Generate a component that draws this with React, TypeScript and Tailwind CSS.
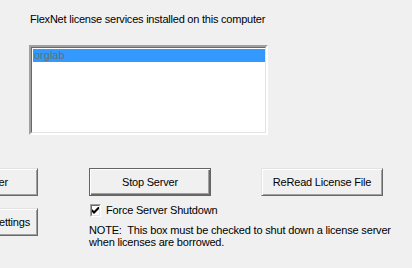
import React from 'react';

const font = { fontFamily: '"Liberation Sans", Arial, sans-serif' };

// Classic raised Windows button
const Btn = ({ children, isDefault = false, className = '' }: { children: React.ReactNode; isDefault?: boolean; className?: string }) => (
    <div
        className={`h-[28px] flex items-center text-[11px] tracking-[-0.2px] text-black bg-[#f0f0f0] ${
            isDefault
                ? 'border border-[#646464] shadow-[inset_1px_1px_0_#ffffff,inset_-1px_-1px_0_#696969,inset_-2px_-2px_0_#a0a0a0]'
                : 'border border-t-[#e3e3e3] border-l-[#e3e3e3] border-r-[#696969] border-b-[#696969] shadow-[inset_1px_1px_0_#ffffff,inset_-1px_-1px_0_#a0a0a0]'
        } ${className}`}
    >
        {children}
    </div>
);

const App = () => {
    return (
        <div className="w-[412px] h-[268px] bg-[#f0f0f0] overflow-hidden" style={font}>
            <p className="pt-[13px] pl-[30px] text-[11px] leading-[13px] tracking-[-0.22px] text-black">
                FlexNet license services installed on this computer
            </p>

            {/* Listbox */}
            <div className="mt-[19px] ml-[29px] w-[239px] h-[90px] bg-white border-2 border-t-[#a0a0a0] border-l-[#a0a0a0] border-r-white border-b-white">
                <div className="h-full border border-t-[#696969] border-l-[#696969] border-r-[#e3e3e3] border-b-[#e3e3e3] pt-[1px] pl-[1px]">
                    <div className="h-[13px] bg-[#3399ff] text-[11px] leading-[13px] text-[#6d6d6d] pl-[1px]">orglab</div>
                </div>
            </div>

            {/* Buttons */}
            <div className="mt-[33px] flex items-start">
                <div className="-ml-[84px] w-[122px] flex flex-col gap-[12px]">
                    <Btn className="justify-end pr-[29px]">Start Server</Btn>
                    <Btn className="justify-end pr-[7px]">Edit Advanced settings</Btn>
                </div>

                <div className="ml-[51px] w-[122px]">
                    <Btn isDefault className="justify-center">Stop Server</Btn>
                    <div className="mt-[8px] flex items-center gap-[5px] ml-[1px]">
                        <div className="w-[13px] h-[13px] bg-white border border-t-[#a0a0a0] border-l-[#a0a0a0] border-r-white border-b-white">
                            <div className="w-full h-full border border-t-[#696969] border-l-[#696969] border-r-[#e3e3e3] border-b-[#e3e3e3] flex items-center justify-center">
                                <svg width="7" height="7" viewBox="0 0 7 7">
                                    <path d="M0 2 L0 5 L2 7 L7 2 L7 -1 L2 4 Z" fill="#000" />
                                </svg>
                            </div>
                        </div>
                        <span className="text-[11px] leading-[13px] tracking-[-0.2px] whitespace-nowrap text-black">Force Server Shutdown</span>
                    </div>
                    <p className="mt-[7px] w-[320px] text-[11px] leading-[12px] tracking-[-0.18px] text-black">
                        NOTE:&nbsp; This box must be checked to shut down a license server
                        <br />
                        when licenses are borrowed.
                    </p>
                </div>

                <Btn className="ml-[50px] w-[122px] justify-center">ReRead License File</Btn>
            </div>
        </div>
    );
};

export default App;
